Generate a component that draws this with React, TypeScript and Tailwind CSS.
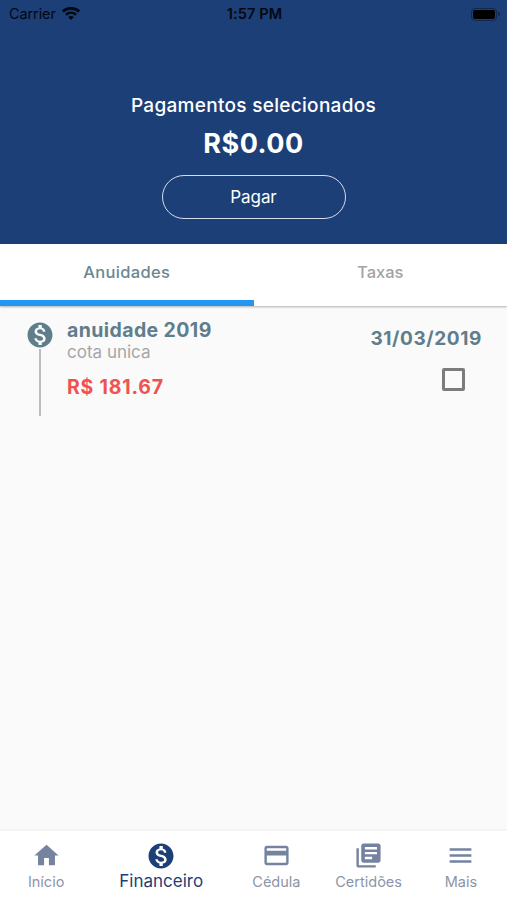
import React from 'react';
import { clsx } from 'clsx';
import type { IconType } from 'react-icons';
import { MdHome, MdLibraryBooks, MdMenu, MdMonetizationOn, MdPayment } from 'react-icons/md';

type NavItem = { label: string; icon: IconType; active?: boolean };

const navItems: NavItem[] = [
  { label: 'Início', icon: MdHome },
  { label: 'Financeiro', icon: MdMonetizationOn, active: true },
  { label: 'Cédula', icon: MdPayment },
  { label: 'Certidões', icon: MdLibraryBooks },
  { label: 'Mais', icon: MdMenu },
];

function WifiIcon() {
  return (
    <svg width="18" height="14" viewBox="0 0 18 14" fill="none" stroke="currentColor">
      <path d="M0.8 4.5C5.3.3 12.7.3 17.2 4.5" strokeWidth="2.9" />
      <path d="M4 7.7C6.9 5.1 11.1 5.1 14 7.7" strokeWidth="2.7" />
      <path d="M9 13 6.2 10.100C7.900 8.700 10.100 8.700 11.800 10.100Z" fill="currentColor" stroke="none" />
    </svg>
  );
}

function StatusBar() {
  return (
    <div className="grid h-7 grid-cols-3 items-center pl-[9px] pr-[7px] text-[#020810]">
      <div className="flex items-center gap-[6px] text-[14.5px] tracking-[-0.1px]">
        <span>Carrier</span>
        <WifiIcon />
      </div>
      <span className="text-center text-[14.5px] font-semibold tracking-[0.1px]">1:57 PM</span>
      <div className="flex items-center justify-end gap-px">
        <div className="h-[13px] w-[26px] rounded-[4px] border border-[#12294f] p-px">
          <div className="h-full rounded-[2px] bg-black" />
        </div>
        <div className="h-1 w-[2px] rounded-r-full bg-[#12294f]" />
      </div>
    </div>
  );
}

function Header() {
  return (
    <header className="h-[244px] bg-[#1c3f77] text-white">
      <StatusBar />
      <div className="flex flex-col items-center pt-[66px]">
        <h1 className="text-[19px] font-medium leading-6 tracking-[0.3px]">Pagamentos selecionados</h1>
        <p className="mt-[10px] text-[27px] font-bold leading-8 tracking-[0.5px]">R$0.00</p>
        <button className="mt-[15px] h-11 w-[184px] rounded-full border-[1.5px] border-[#d5dcec] pt-px text-[17px] tracking-[-0.1px]">
          Pagar
        </button>
      </div>
    </header>
  );
}

function Tabs() {
  return (
    <div className="grid h-[62px] grid-cols-2 bg-white text-[16.5px] font-medium tracking-[0.3px] shadow-[0_1px_2px_rgba(0,0,0,0.3)]">
      <button className="border-b-[6px] border-[#2196f3] text-[#6c8792]">Anuidades</button>
      <button className="pb-[6px] tracking-normal text-[#a3a3a3]">Taxas</button>
    </div>
  );
}

function Installment() {
  return (
    <div className="flex pl-[25px] pr-[25px] pt-[14px]">
      <div className="flex w-[30px] flex-col items-center">
        <MdMonetizationOn className="size-[30px] text-[#607d8b]" />
        <div className="-mt-px h-[67px] w-[2px] bg-[#bcbcbc]" />
      </div>
      <div className="ml-3 flex-1">
        <h2 className="text-[19.5px] font-bold leading-5 tracking-[0.4px] text-[#607d8b]">anuidade 2019</h2>
        <p className="text-[17px] leading-6 text-[#a6a6a6]">cota unica</p>
        <p className="mt-[11px] text-[19.5px] font-bold leading-6 tracking-[0.8px] text-[#ef5350]">R$ 181.67</p>
      </div>
      <div className="flex flex-col items-end pt-[7px]">
        <span className="text-[19px] font-bold leading-6 tracking-[0.6px] text-[#607d8b]">31/03/2019</span>
        <div role="checkbox" aria-checked={false} className="mr-[17px] mt-[17px] size-[23px] rounded-[2px] border-3 border-[#7c7c7c]" />
      </div>
    </div>
  );
}

function BottomNav() {
  return (
    <nav className="flex h-[69px] bg-white pt-[10px] shadow-[0_-1px_3px_rgba(0,0,0,0.06)]">
      {navItems.map(({ label, icon: Icon, active }) => (
        <a
          key={label}
          className={clsx(
            'flex flex-col items-center whitespace-nowrap',
            active ? 'w-[138px] text-[#1c3f77]' : 'w-[92.25px] text-[#7583a0]'
          )}
        >
          <Icon className={active ? 'size-[30px]' : 'size-[29px]'} />
          <span
            className={
              active ? 'text-[17px] leading-5' : 'mt-[2px] text-[14.5px] leading-5 text-[#8c94a8]'
            }
          >
            {label}
          </span>
        </a>
      ))}
    </nav>
  );
}

export default function App() {
  return (
    <div className="flex h-[900px] w-[507px] flex-col overflow-hidden bg-[#fafafa] font-['Inter',sans-serif]">
      <Header />
      <Tabs />
      <main className="flex-1">
        <Installment />
      </main>
      <BottomNav />
    </div>
  );
}
